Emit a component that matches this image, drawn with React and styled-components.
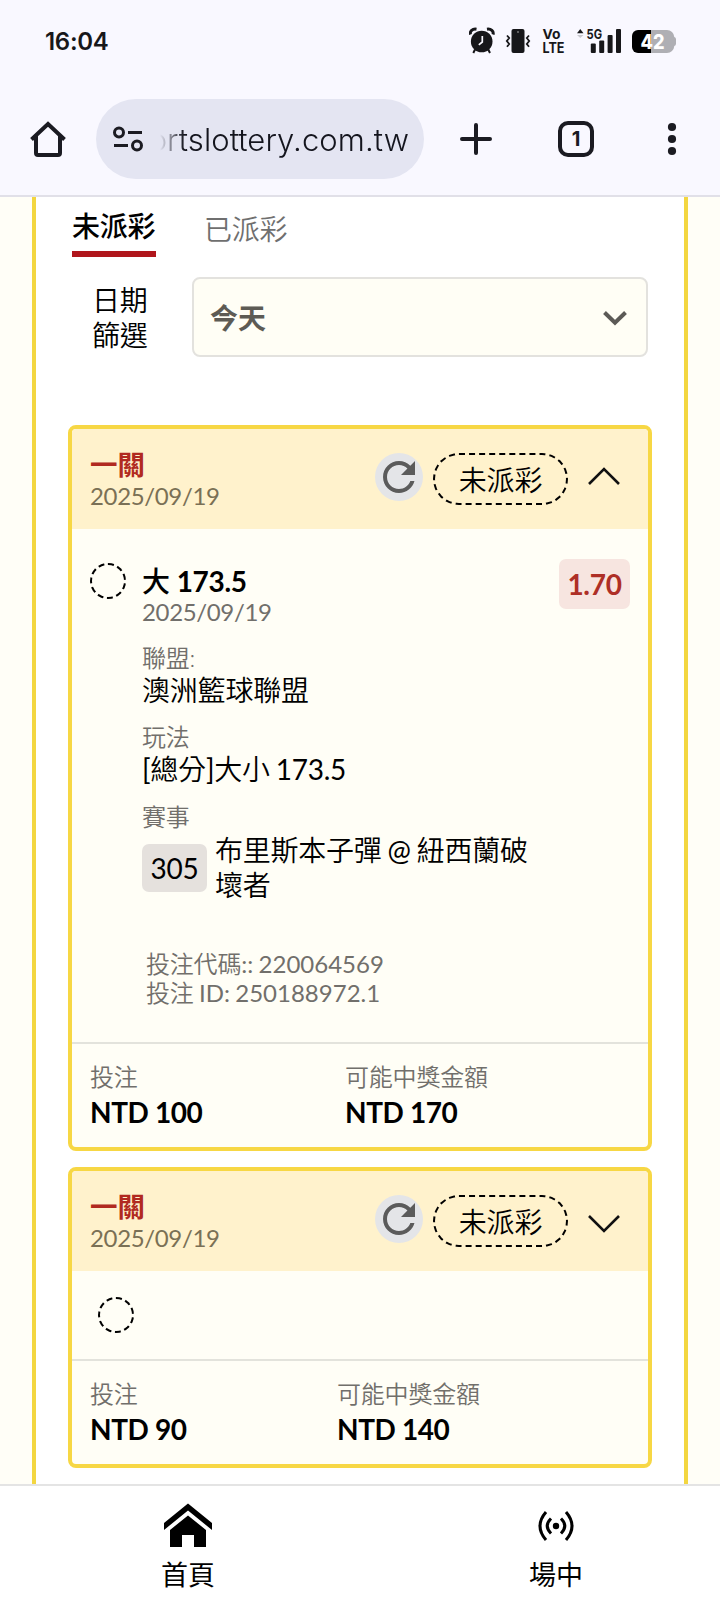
import React from "react";
import styled, { createGlobalStyle } from "styled-components";

const Global = createGlobalStyle`
  * { box-sizing: border-box; }
  body {
    margin: 0;
    background: #fff;
    font-family: "Lato", "Noto Sans CJK TC", sans-serif;
    color: #000;
  }
  svg { display: block; flex: none; }
`;

const Phone = styled.div`
  width: 720px;
  height: 1604px;
  display: flex;
  flex-direction: column;
  overflow: hidden;
`;

/* ---------- system + browser chrome ---------- */

const Chrome = styled.header`
  flex: none;
  height: 197px;
  background: #f9f8ff;
  border-bottom: 2px solid #e1e0e8;
  font-family: "Inter", sans-serif;
  color: #1a1b22;
`;

const StatusBar = styled.div`
  height: 82px;
  padding: 0 43px 0 45px;
  display: flex;
  align-items: center;
  justify-content: space-between;
`;

const Clock = styled.span`
  font-size: 24px;
  font-weight: 600;
  letter-spacing: -0.3px;
  color: #17171a;
`;

const Toolbar = styled.div`
  height: 113px;
  padding: 17px 28px 16px;
  display: flex;
  align-items: center;
`;

const AddressBar = styled.div`
  width: 328px;
  height: 80px;
  margin-left: 28px;
  padding: 0 15px 0 15px;
  border-radius: 40px;
  background: #e4e5f2;
  display: flex;
  align-items: center;
  justify-content: space-between;
`;

const Url = styled.div`
  width: 261px;
  display: flex;
  justify-content: flex-end;
  padding-top: 2px;
  font-size: 31px;
  line-height: 44px;
  font-weight: 350;
  letter-spacing: 0.08px;
  white-space: nowrap;
  color: #14151e;
  mask-image: linear-gradient(to right, transparent 12px, #000 36px);
`;

const ToolIcons = styled.div`
  flex: 1;
  display: flex;
  align-items: center;
  justify-content: space-between;
  padding: 0 12px 0 36px;
`;

const TabCount = styled.div`
  width: 36px;
  height: 36px;
  margin-right: 4px;
  border: 4px solid #1b1b22;
  border-radius: 10px;
  display: flex;
  align-items: center;
  justify-content: center;
  font-size: 20px;
  font-weight: 700;
`;

/* ---------- page ---------- */

const Page = styled.main`
  flex: 1;
  min-height: 0;
  padding: 0 32px;
  background: #fffef7;
  display: flex;
`;

const Panel = styled.section`
  flex: 1;
  border: solid #f3d640;
  border-width: 0 4px;
  background: #fff;
  padding: 0 32px;
`;

const Tabs = styled.nav`
  display: flex;
  gap: 48px;
  padding-left: 4px;
  height: 60px;
`;

const Tab = styled.div`
  width: 84px;
  font-size: 28px;
  line-height: 34px;
  letter-spacing: -0.2px;
  padding-top: ${(p) => (p.$active ? 12 : 15)}px;
  font-weight: ${(p) => (p.$active ? 500 : 350)};
  color: ${(p) => (p.$active ? "#000" : "#6f6f6f")};
  border-bottom: ${(p) => (p.$active ? "6px solid #b0161c" : "none")};
`;

const Filter = styled.div`
  display: flex;
  padding: 20px 4px 0 24px;
  height: 168px;
`;

const FilterLabel = styled.div`
  width: 56px;
  margin-right: 44px;
  padding-top: 6px;
  font-size: 28px;
  line-height: 34.5px;
  font-weight: 350;
  letter-spacing: -0.2px;
`;

const Select = styled.div`
  flex: 1;
  height: 80px;
  border: 2px solid #e3e2de;
  border-radius: 8px;
  background: #fffef5;
  padding: 0 18px 0 16px;
  display: flex;
  align-items: center;
  justify-content: space-between;
  font-size: 28px;
  font-weight: 700;
  color: #5d5b54;
`;

const Card = styled.article`
  border: 4px solid #f7d744;
  border-radius: 8px;
  overflow: hidden;
  background: #fffef6;
  margin-bottom: 16px;
`;

const CardHeader = styled.div`
  height: 100px;
  padding: 20px 28px 0 18px;
  background: #fff2cc;
  display: flex;
`;

const CardTitle = styled.div`
  flex: 1;
  font-size: 27.5px;
  line-height: 32px;
  font-weight: 700;
  color: #b12a20;
`;

const Meta = styled.div`
  font-size: 24px;
  line-height: 29px;
  font-weight: ${(p) => (p.$latin ? 400 : 350)};
  letter-spacing: ${(p) => (p.$latin ? "-0.35px" : "-0.2px")};
  color: ${(p) => (p.$warm ? "#7a7055" : "#716f6b")};
`;

const Refresh = styled.div`
  width: 48px;
  height: 48px;
  margin: 4px 10px 0 0;
  border-radius: 50%;
  background: #e4e5e8;
`;

const StatusPill = styled.div`
  width: 135px;
  height: 52px;
  margin: 4px 20px 0 0;
  border: 2px dashed #000;
  border-radius: 26px;
  text-align: center;
  font-size: 28px;
  line-height: 50px;
  font-weight: 350;
  letter-spacing: -0.2px;
`;

const Toggle = styled.div`
  padding-top: ${(p) => (p.$open ? 17 : 22)}px;
`;

const Bet = styled.div`
  display: flex;
  height: 513px;
  padding: 34px 18px 0;
`;

const Collapsed = styled.div`
  height: 88px;
  padding: 26px 26px 0;
`;

const Pending = styled.div`
  width: 36px;
  height: 36px;
  border: 2px dashed #000;
  border-radius: 50%;
`;

const Details = styled.div`
  flex: 1;
  margin-left: 16px;
`;

const Value = styled.div`
  font-size: 28px;
  line-height: 34px;
  padding-top: 1px;
  margin-bottom: -1px;
  font-weight: ${(p) => (p.$bold ? 500 : 350)};
  letter-spacing: -0.2px;
`;

const Latin = styled.span`
  font-weight: ${(p) => (p.$bold ? 700 : 400)};
  letter-spacing: ${(p) => (p.$code ? "0" : "-0.3px")};
  word-spacing: -0.8px;
`;

const Field = styled.div`
  margin-top: 16.7px;
`;

const Match = styled.div`
  display: flex;
  align-items: center;
  gap: 8px;
  padding-top: 1px;
`;

const Teams = styled.div`
  width: 322px;
  padding-top: 1px;
  font-size: 28px;
  line-height: 35px;
  font-weight: 350;
  letter-spacing: -0.25px;
`;

const MatchNo = styled.div`
  width: 65px;
  height: 48px;
  border-radius: 7px;
  background: #e5e1dd;
  text-align: center;
  font-size: 28px;
  line-height: 49px;
  letter-spacing: -0.3px;
`;

const Codes = styled.div`
  margin: 46px 0 0 4px;
`;

const Odds = styled.div`
  width: 71px;
  height: 50px;
  margin-top: -4px;
  border-radius: 7px;
  background: #f7e5e0;
  text-align: center;
  font-size: 28px;
  line-height: 51px;
  font-weight: 700;
  letter-spacing: -0.3px;
  color: #ae2f26;
`;

const Totals = styled.div`
  height: 105px;
  padding: 18px 18px 0;
  border-top: 2px solid #e3e3dc;
  display: grid;
  grid-template-columns: ${(p) => p.$first}px 1fr;
`;

const Amount = styled.div`
  margin-top: 4px;
  font-size: 28px;
  line-height: 34px;
  font-weight: 700;
  letter-spacing: -0.4px;
`;

const BottomNav = styled.nav`
  flex: none;
  height: 120px;
  padding-left: 4px;
  border-top: 2px solid #e4e4e4;
  background: #fff;
  display: flex;
`;

const NavItem = styled.div`
  flex: none;
  width: 368px;
  padding-top: 15px;
  display: flex;
  flex-direction: column;
  align-items: center;
  gap: 11px;
  font-size: 27px;
  line-height: 34px;
  font-weight: 400;
`;

function StatusIcons() {
  return (
    <svg width="208" height="28" viewBox="469 27 208 28" fill="#17171a" fontFamily="Inter, sans-serif">
      <circle cx="481.7" cy="41.5" r="10.8" />
      <path d="M470.5 34.5c-1-3 2-6 6-5.3M493 34.5c1-3-2-6-6-5.3" fill="none" stroke="#17171a" strokeWidth="3" />
      <path d="M475 49.500l-1.700 3.500M488.300 49.500l1.700 3.500" stroke="#17171a" strokeWidth="2" />
      <path d="M482.300 36v6l-3.500 2.800" fill="none" stroke="#f9f8ff" strokeWidth="1.700" />
      <rect x="511.500" y="29" width="13" height="24" rx="2" />
      <circle cx="518" cy="32" r=".8" fill="#bbb" />
      <path d="M507 35.500l2.200 2.500-2.400 3 2.400 3-2.200 2.800M529 35.500l-2.200 2.500 2.400 3-2.400 3 2.200 2.800" fill="none" stroke="#17171a" strokeWidth="1.800" />
      <text x="542.500" y="39" fontSize="13.500" fontWeight="700" textLength="18" lengthAdjust="spacingAndGlyphs">Vo</text>
      <text x="542.500" y="53" fontSize="14" fontWeight="700" textLength="22" lengthAdjust="spacingAndGlyphs">LTE</text>
      <path d="M577 33.200h6.500l-3.250-4.200z" />
      <path d="M577 35h6.500l-3.250 3z" fill="#c9c9cf" />
      <text x="586.500" y="38.600" fontSize="13.200" fontWeight="700" textLength="15.500" lengthAdjust="spacingAndGlyphs">5G</text>
      <rect x="590.800" y="43.500" width="5" height="9.500" rx="1" />
      <rect x="599.200" y="40.500" width="5" height="12.500" rx="1" />
      <rect x="607.600" y="35" width="5" height="18" rx="1" />
      <rect x="616" y="29" width="5" height="24" rx="1" />
      <path d="M651 30h16a7.500 7.500 0 0 1 7.300 7q1.700.5 1.700 2.300v4.400q0 1.800-1.700 2.300a7.500 7.500 0 0 1-7.300 7h-16z" fill="#afafb4" />
      <path d="M651 30h-13a6 6 0 0 0-6 6v11a6 6 0 0 0 6 6h13z" fill="#000" />
      <text x="640.500" y="49" fontSize="20.500" fontWeight="800" fill="#fff" textLength="24" lengthAdjust="spacingAndGlyphs">42</text>
    </svg>
  );
}

const HomeOutline = () => (
  <svg width="40" height="40" viewBox="0 0 40 40" fill="none" stroke="#1b1b22" strokeWidth="4">
    <path d="M3.500 20.500L20 5l16.500 15.500" />
    <path d="M8 17v17q0 2 2 2h20q2 0 2-2V17" strokeLinejoin="round" />
  </svg>
);

const SiteSettings = () => (
  <svg width="34" height="28" viewBox="0 0 34 28" fill="none" stroke="#1b1b22" strokeWidth="3">
    <circle cx="8" cy="7.500" r="4.500" />
    <path d="M17 7.500h14M3 20.500h14" />
    <circle cx="26" cy="20.500" r="4.500" />
  </svg>
);

const Plus = () => (
  <svg width="32" height="32" viewBox="0 0 32 32" stroke="#1b1b22" strokeWidth="4" strokeLinecap="round">
    <path d="M16 2v28M2 16h28" />
  </svg>
);

const Dots = () => (
  <svg width="16" height="36" viewBox="0 0 16 36" fill="#1b1b22">
    <circle cx="8" cy="6" r="4.100" />
    <circle cx="8" cy="18" r="4.100" />
    <circle cx="8" cy="30" r="4.100" />
  </svg>
);

const SelectArrow = () => (
  <svg width="26" height="18" viewBox="0 -2 26 18" fill="none" stroke="#5c5a56" strokeWidth="4">
    <path d="M2.500 2.500L13 12.800 23.500 2.500" />
  </svg>
);

const Chevron = ({ up }) => (
  <svg width="32" height="20" viewBox="0 0 32 20" fill="none" stroke="#111" strokeWidth="2.600">
    <path d={up ? "M1 18L16 3l15 15" : "M1 3l15 15L31 3"} />
  </svg>
);

const RefreshIcon = () => (
  <svg width="48" height="48" viewBox="0 0 24 24" fill="#5b5b5b">
    <path d="M17.650 6.350C16.200 4.900 14.210 4 12 4c-4.420 0-7.990 3.580-7.990 8s3.570 8 7.990 8c3.730 0 6.840-2.550 7.730-6h-2.080c-.82 2.330-3.040 4-5.650 4-3.310 0-6-2.690-6-6s2.690-6 6-6c1.660 0 3.140.69 4.220 1.780L13 11h7V4l-2.350 2.350z" />
  </svg>
);

const HomeSolid = () => (
  <svg width="48" height="46" viewBox="0 0 48 46">
    <path d="M24 2.500L48 22v7L24 9.500 0 29v-7z" />
    <path d="M24 14.500L42 29v17H30V34H18v12H6V29z" />
  </svg>
);

const LiveIcon = () => (
  <svg width="48" height="46" viewBox="0 0 48 46" fill="none" stroke="#000" strokeWidth="3">
    <circle cx="24" cy="25" r="3.200" fill="#000" stroke="none" />
    <path d="M19 17.500q-7.500 7.500 0 15M29 17.500q7.500 7.500 0 15M14 11q-12 14 0 28M34 11q12 14 0 28" />
  </svg>
);

function TicketHeader({ open }) {
  return (
    <CardHeader>
      <CardTitle>
        一關
        <Meta $warm $latin>2025/09/19</Meta>
      </CardTitle>
      <Refresh>
        <RefreshIcon />
      </Refresh>
      <StatusPill>未派彩</StatusPill>
      <Toggle $open={open}>
        <Chevron up={open} />
      </Toggle>
    </CardHeader>
  );
}

function TicketTotals({ stake, payout, first }) {
  return (
    <Totals $first={first}>
      <div>
        <Meta>投注</Meta>
        <Amount>NTD {stake}</Amount>
      </div>
      <div>
        <Meta>可能中獎金額</Meta>
        <Amount>NTD {payout}</Amount>
      </div>
    </Totals>
  );
}

export default function App() {
  return (
    <Phone>
      <Global />
      <Chrome>
        <StatusBar>
          <Clock>16:04</Clock>
          <StatusIcons />
        </StatusBar>
        <Toolbar>
          <HomeOutline />
          <AddressBar>
            <SiteSettings />
            <Url>ortslottery.com.tw</Url>
          </AddressBar>
          <ToolIcons>
            <Plus />
            <TabCount>1</TabCount>
            <Dots />
          </ToolIcons>
        </Toolbar>
      </Chrome>

      <Page>
        <Panel>
          <Tabs>
            <Tab $active>未派彩</Tab>
            <Tab>已派彩</Tab>
          </Tabs>
          <Filter>
            <FilterLabel>日期篩選</FilterLabel>
            <Select>
              今天
              <SelectArrow />
            </Select>
          </Filter>

          <Card>
            <TicketHeader open />
            <Bet>
              <Pending />
              <Details>
                <Value $bold>
                  大 <Latin $bold>173.5</Latin>
                </Value>
                <Meta $latin>2025/09/19</Meta>
                <Field>
                  <Meta>聯盟:</Meta>
                  <Value>澳洲籃球聯盟</Value>
                </Field>
                <Field>
                  <Meta>玩法</Meta>
                  <Value>
                    <Latin>[</Latin>總分<Latin>]</Latin>大小<Latin> 173.5</Latin>
                  </Value>
                </Field>
                <Field>
                  <Meta>賽事</Meta>
                  <Match>
                    <MatchNo>305</MatchNo>
                    <Teams>
                      布里斯本子彈<Latin> @ </Latin>紐西蘭破壞者
                    </Teams>
                  </Match>
                </Field>
                <Codes>
                  <Meta>
                    投注代碼<Latin $code>:: 220064569</Latin>
                  </Meta>
                  <Meta>
                    投注<Latin $code> ID: 250188972.1</Latin>
                  </Meta>
                </Codes>
              </Details>
              <Odds>1.70</Odds>
            </Bet>
            <TicketTotals stake="100" payout="170" first={255} />
          </Card>

          <Card>
            <TicketHeader />
            <Collapsed>
              <Pending />
            </Collapsed>
            <TicketTotals stake="90" payout="140" first={247} />
          </Card>
        </Panel>
      </Page>

      <BottomNav>
        <NavItem>
          <HomeSolid />
          首頁
        </NavItem>
        <NavItem>
          <LiveIcon />
          場中
        </NavItem>
      </BottomNav>
    </Phone>
  );
}
